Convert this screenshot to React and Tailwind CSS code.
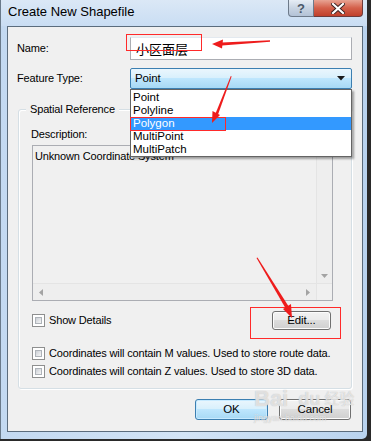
import React from "react";

const font = { fontFamily: '"Liberation Sans", Arial, "Noto Sans CJK SC", sans-serif' };

function Checkbox() {
  return (
    <div className="w-[13px] h-[13px] border border-[#8e8f8f] bg-white p-[2px] shrink-0">
      <div className="w-full h-full bg-[linear-gradient(135deg,#cbcfd5,#f6f6f6)] border border-[#aeb3b9]" />
    </div>
  );
}

function Btn({ children, def, className = "" }) {
  return (
    <div
      className={
        "flex items-center justify-center rounded-[3px] border text-[11.5px] text-black " +
        (def
          ? "border-[#3c7fb1] bg-[linear-gradient(#eaf6fd_0%,#d9f0fc_45%,#bee6fd_50%,#a7d9f5_100%)] shadow-[inset_0_0_0_1px_#c7eaff]"
          : "border-[#707070] bg-[linear-gradient(#f2f2f2_0%,#ebebeb_45%,#dddddd_50%,#cfcfcf_100%)] shadow-[inset_0_0_0_1px_#fcfcfc]") +
        " " +
        className
      }
    >
      {children}
    </div>
  );
}

export default function App() {
  return (
    <div className="relative w-[371px] h-[441px] overflow-hidden bg-[#2a2a2a]" style={font}>
      <div className="w-[367px] h-[439px] bg-[linear-gradient(90deg,#c3d9f1,#d3e4f6_50%,#b9d3ef)] flex flex-col border-l border-[#6a7a8a] rounded-br-[5px]">
        {/* title bar */}
        <div className="h-[26px] flex items-start shrink-0 bg-[linear-gradient(#dbe8f6,#c9ddf3)]">
          <div className="pl-[7px] pt-[4px] text-[13px] text-black leading-[16px] whitespace-nowrap">
            Create New Shapefile
          </div>
          <div className="ml-auto mr-[4px] flex h-[17px]">
            <div className="w-[26px] h-[17px] rounded-bl-[4px] border border-t-0 border-[#6d7a8a] bg-[linear-gradient(#e6edf5,#c8d4e2_50%,#b3c2d6)] flex items-center justify-center text-[13px] font-bold text-[#4a5868] leading-none">
              ?
            </div>
            <div className="w-[49px] h-[17px] rounded-br-[4px] border border-l-0 border-t-0 border-[#6d3a3a] bg-[linear-gradient(#e8a493,#d4604a_50%,#c0402c)] flex items-center justify-center">
              <svg width="14" height="11" viewBox="0 0 14 11">
                <path d="M2 1 L12 10 M12 1 L2 10" stroke="#3a2020" strokeWidth="4" strokeLinecap="square" />
                <path d="M2 1 L12 10 M12 1 L2 10" stroke="#ffffff" strokeWidth="2.2" strokeLinecap="square" />
              </svg>
            </div>
          </div>
        </div>
        {/* client */}
        <div className="ml-[6px] mr-[4px] mb-[7px] flex-1 border border-[#5b6c7d] bg-[#f0f0f0] flex flex-col text-[11px] tracking-[-0.15px] text-black whitespace-nowrap">
          <div className="flex items-center mt-[10px] h-[23px]">
            <div className="w-[122px] pl-[9px]">Name:</div>
            <div className="w-[222px] h-[23px] border border-[#abadb3] border-t-[#e3e9ef] bg-white flex items-center pl-[5px] text-[13px] tracking-normal" style={{ fontFamily: '"Noto Sans CJK SC", sans-serif' }}>
              小区面层
            </div>
          </div>
          <div className="flex items-center mt-[8px] h-[21px]">
            <div className="w-[122px] pl-[9px]">Feature Type:</div>
            <div className="w-[222px] h-[21px] border border-[#3c7fb1] rounded-[2px] bg-[linear-gradient(#eaf6fd_0%,#d9f0fc_45%,#bee6fd_50%,#a7d9f5_100%)] flex items-center pl-[4px] pr-[6px] text-[11.5px]">
              <span>Point</span>
              <svg className="ml-auto" width="8" height="5" viewBox="0 0 8 5">
                <path d="M0 0 H8 L4 4.5 Z" fill="#1a1a1a" />
              </svg>
            </div>
          </div>
          {/* group box */}
          <div className="relative mx-[10px] mt-[20px] h-[280px] border border-[#d5dfe5] rounded-[3px] shadow-[inset_1px_1px_0_#ffffff,1px_1px_0_#ffffff] flex flex-col">
            <div className="absolute -top-[8px] left-[7px] px-[4px] bg-[#f0f0f0] leading-[14px]">Spatial Reference</div>
            <div className="pl-[12px] mt-[17px] leading-[14px]">Description:</div>
            <div className="ml-[13px] mt-[4px] w-[301px] h-[156px] border border-[#abadb3] bg-[#f0f0f0] flex flex-col">
              <div className="flex flex-1">
                <div className="flex-1 pl-[2px] pt-[3px] leading-[14px]">Unknown Coordinate System</div>
                <div className="w-[16px] flex flex-col items-center justify-between py-[5px] bg-[#eeeeee] border-l border-[#e4e4e4]">
                  <svg width="7" height="4" viewBox="0 0 7 4"><path d="M0 4 H7 L3.5 0 Z" fill="#a3a3a3" /></svg>
                  <svg width="7" height="4" viewBox="0 0 7 4"><path d="M0 0 H7 L3.5 4 Z" fill="#a3a3a3" /></svg>
                </div>
              </div>
              <div className="flex h-[17px] border-t border-[#e4e4e4]">
                <div className="flex-1 flex items-center justify-between px-[6px] bg-[#eeeeee]">
                  <svg width="4" height="7" viewBox="0 0 4 7"><path d="M4 0 V7 L0 3.5 Z" fill="#a3a3a3" /></svg>
                  <svg width="4" height="7" viewBox="0 0 4 7"><path d="M0 0 V7 L4 3.5 Z" fill="#a3a3a3" /></svg>
                </div>
                <div className="w-[16px] bg-[#f0f0f0] border-l border-[#e4e4e4]" />
              </div>
            </div>
            <div className="flex items-center mt-[10px] pl-[13px] pr-[20px] h-[19px]">
              <Checkbox />
              <span className="ml-[4px]">Show Details</span>
              <Btn className="ml-auto w-[59px] h-[19px]">Edit...</Btn>
            </div>
            <div className="flex items-center mt-[17px] pl-[13px] h-[13px]">
              <Checkbox />
              <span className="ml-[4px]">Coordinates will contain M values. Used to store route data.</span>
            </div>
            <div className="flex items-center mt-[5px] pl-[13px] h-[13px]">
              <Checkbox />
              <span className="ml-[4px]">Coordinates will contain Z values. Used to store 3D data.</span>
            </div>
          </div>
          <div className="flex justify-end mt-[10px] pr-[11px] gap-[11px]">
            <Btn def className="w-[73px] h-[21px]">OK</Btn>
            <Btn className="w-[72px] h-[21px]">Cancel</Btn>
          </div>
        </div>
      </div>

      {/* dropdown list */}
      <div className="absolute left-[130px] top-[89px] w-[222px] h-[68px] bg-white border border-[#646464] shadow-[2px_2px_2px_rgba(0,0,0,0.35)] flex flex-col text-[11.5px] leading-[13px] py-[1px]">
        <div className="pl-[2px] h-[13px]">Point</div>
        <div className="pl-[2px] h-[13px]">Polyline</div>
        <div className="pl-[2px] h-[13px] bg-[#3399ff] text-white">Polygon</div>
        <div className="pl-[2px] h-[13px]">MultiPoint</div>
        <div className="pl-[2px] h-[13px]">MultiPatch</div>
      </div>

      {/* watermark */}
      <div className="absolute left-[254px] top-[386px] pointer-events-none flex flex-col items-start whitespace-nowrap">
        <div className="flex items-end text-[22px] font-bold leading-[26px] text-white/60 [text-shadow:0_0_1px_#b0b0b0]">
          <span>Bai</span>
          <span className="text-[18px] ml-[10px]">du</span>
          <span className="text-[15px] ml-[4px] font-normal">经验</span>
        </div>
        <div className="text-[9px] leading-[11px] mt-[1px] text-white/60 [text-shadow:0_0_1px_#b0b0b0]">jingyan.baidu.com</div>
      </div>

      {/* annotations */}
      <div className="absolute left-[126px] top-[34px] w-[76px] h-[17px] border border-[#ff2a2a]" />
      <div className="absolute left-[130px] top-[117px] w-[96px] h-[14px] border border-[#ff2a2a]" />
      <div className="absolute left-[250px] top-[307px] w-[91px] h-[32px] border border-[#ff2a2a]" />
      <svg className="absolute left-0 top-0 pointer-events-none" width="371" height="441" viewBox="0 0 371 441">
        <g fill="#ee1c1c">
          <polygon points="270,40.3 270,41.7 222,45.5 222,42.5" />
          <polygon points="212,44 223,39.5 222,48.5" />
          <polygon points="230.8,76 231.6,76.4 217.5,116 215,114.8" />
          <polygon points="212,123 212.5,111 220,115" />
          <polygon points="256.5,258 257.5,257.5 289,307 286,309" />
          <polygon points="292,318 283,309 291,304" />
        </g>
      </svg>
    </div>
  );
}
